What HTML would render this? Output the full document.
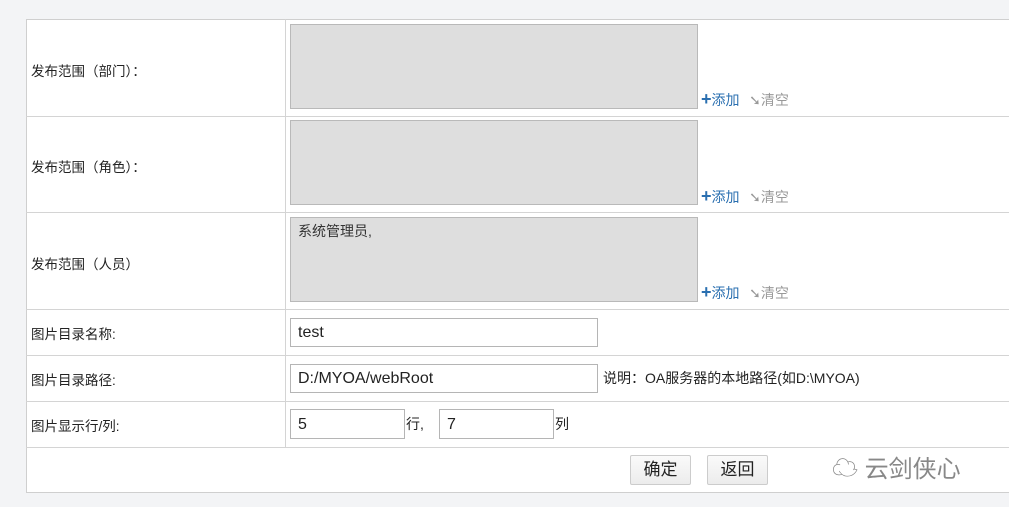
<!DOCTYPE html>
<html><head><meta charset="utf-8"><style>
body{margin:0;width:1009px;height:507px;background:#f3f4f6;position:relative;overflow:hidden;font-family:"Liberation Sans","Noto Sans CJK SC",sans-serif;font-size:13px;color:#222}
.a{position:absolute}
.tbl{left:26px;top:19px;width:990px;height:474px;background:#fff;border:1px solid #cfcfcf;box-sizing:border-box}
.h{left:26px;width:990px;height:1px;background:#d4d4d4}
.lbl{left:31px;font-size:13.5px}
.ta{left:290px;width:408px;height:85px;background:#dedede;border:1px solid #b9b9b9;box-sizing:border-box;font-size:14px;padding:3px 7px;color:#333}
.add{color:#2a6fb0;font-size:14px}
.clr{color:#999;font-size:14px}
.in{background:#fff;border:1px solid #b5b5b5;box-sizing:border-box;font-size:16px;padding:0 7px;line-height:27px;color:#222;height:29px}
.btn{top:455px;height:30px;border:1px solid #ccc;border-radius:2px;background:linear-gradient(#fafafa,#ececec);box-sizing:border-box;font-size:17px;text-align:center;line-height:28px}
</style></head><body>
<div class="a tbl"></div>
<div class="a" style="left:285px;top:19px;width:1px;height:428px;background:#d4d4d4"></div>
<div class="a h" style="top:116px"></div>
<div class="a h" style="top:212px"></div>
<div class="a h" style="top:309px"></div>
<div class="a h" style="top:355px"></div>
<div class="a h" style="top:401px"></div>
<div class="a h" style="top:447px"></div>

<div class="a lbl" style="top:60px">发布范围（部门）：</div>
<div class="a lbl" style="top:156px">发布范围（角色）：</div>
<div class="a lbl" style="top:253px">发布范围（人员）</div>
<div class="a lbl" style="top:323px">图片目录名称:</div>
<div class="a lbl" style="top:369px">图片目录路径:</div>
<div class="a lbl" style="top:415px">图片显示行/列:</div>

<div class="a ta" style="top:24px"></div>
<div class="a ta" style="top:120px"></div>
<div class="a ta" style="top:217px">系统管理员,</div>

<div class="a" style="left:701px;top:89px"><span class="add"><b style="font-size:18px">+</b>添加</span> <span class="clr" style="margin-left:6px">➘清空</span></div>
<div class="a" style="left:701px;top:186px"><span class="add"><b style="font-size:18px">+</b>添加</span> <span class="clr" style="margin-left:6px">➘清空</span></div>
<div class="a" style="left:701px;top:282px"><span class="add"><b style="font-size:18px">+</b>添加</span> <span class="clr" style="margin-left:6px">➘清空</span></div>

<div class="a in" style="left:290px;top:318px;width:308px">test</div>
<div class="a in" style="left:290px;top:364px;width:308px">D:/MYOA/webRoot</div>
<div class="a" style="left:603px;top:368px;font-size:14px">说明：OA服务器的本地路径(如D:\MYOA)</div>
<div class="a in" style="left:290px;top:409px;width:115px;height:30px;line-height:29px">5</div>
<div class="a" style="left:406px;top:414px;font-size:14px">行,</div>
<div class="a in" style="left:439px;top:409px;width:115px;height:30px;line-height:29px">7</div>
<div class="a" style="left:555px;top:414px;font-size:14px">列</div>

<div class="a btn" style="left:630px;width:61px">确定</div>
<div class="a btn" style="left:707px;width:61px">返回</div>
<div class="a" style="left:832px;top:448px;font-size:24px;color:#888"><span style="font-size:26px">☁</span> 云剑侠心</div>
</body></html>
